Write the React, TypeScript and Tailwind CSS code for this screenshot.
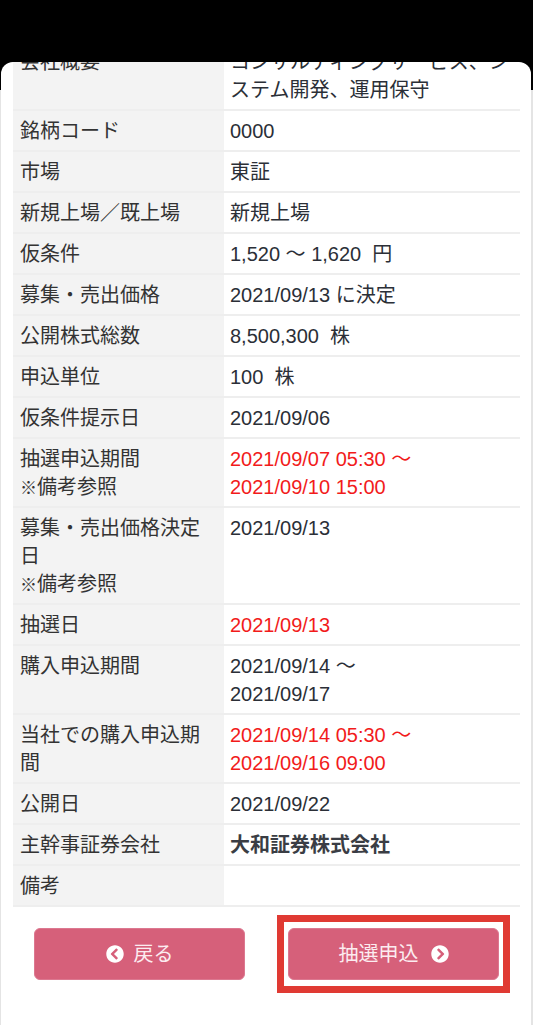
import { FaChevronCircleLeft, FaChevronCircleRight } from "react-icons/fa"

type Row = { label: React.ReactNode; value: React.ReactNode; tone?: "red" | "bold" }

// one fixed-height line, so mixed fonts can't stretch the row
function L({ children }: { children: React.ReactNode }) {
  return <div className="h-[28px] whitespace-nowrap">{children}</div>
}

const note = (
  <L>
    <span className="text-[17px] leading-none">※</span>備考参照
  </L>
)

const rows: Row[] = [
  { label: "会社概要", value: "コンサルティングサービス、システム開発、運用保守" },
  { label: "銘柄コード", value: "0000" },
  { label: "市場", value: "東証" },
  { label: "新規上場／既上場", value: "新規上場" },
  { label: "仮条件", value: <L>1,520 〜 1,620{"\u00a0 "}円</L> },
  { label: "募集・売出価格", value: <L>2021/09/13 に決定</L> },
  { label: "公開株式総数", value: <L>8,500,300{"\u00a0 "}株</L> },
  { label: "申込単位", value: <L>100{"\u00a0 "}株</L> },
  { label: "仮条件提示日", value: "2021/09/06" },
  {
    label: (
      <>
        <L>抽選申込期間</L>
        {note}
      </>
    ),
    value: (
      <>
        <L>2021/09/07 05:30 〜</L>
        <L>2021/09/10 15:00</L>
      </>
    ),
    tone: "red",
  },
  {
    label: (
      <>
        <L>募集・売出価格決定</L>
        <L>日</L>
        {note}
      </>
    ),
    value: "2021/09/13",
  },
  { label: "抽選日", value: "2021/09/13", tone: "red" },
  {
    label: "購入申込期間",
    value: (
      <>
        <L>2021/09/14 〜</L>
        <L>2021/09/17</L>
      </>
    ),
  },
  {
    label: (
      <>
        <L>当社での購入申込期</L>
        <L>間</L>
      </>
    ),
    value: (
      <>
        <L>2021/09/14 05:30 〜</L>
        <L>2021/09/16 09:00</L>
      </>
    ),
    tone: "red",
  },
  { label: "公開日", value: "2021/09/22" },
  { label: "主幹事証券会社", value: "大和証券株式会社", tone: "bold" },
  { label: "備考", value: "" },
]

export default function App() {
  return (
    <div className="min-h-screen bg-[linear-gradient(to_bottom,#000_90px,#e4e4e4_90px)] pl-[1px] pr-[2px] pt-[62px] font-['Liberation_Sans','Noto_Sans_CJK_JP',sans-serif] text-[20px] leading-[28px]">
      <div className="min-h-[963px] overflow-hidden rounded-t-[12px] bg-white pl-[12px] pr-[11px]">
        <div className="-mt-[20px]">
          {rows.map((row, i) => (
            <div key={i} className="grid grid-cols-[211px_1fr] border-b-2 border-[#eeeeee]">
              <div className="bg-[#f3f3f3] pb-[5px] pl-[7px] pr-[7px] pt-[6px] text-[#333333]">
                {typeof row.label === "string" ? <L>{row.label}</L> : row.label}
              </div>
              <div
                className={`pb-[5px] pl-[6px] pr-[6px] pt-[6px] ${
                  row.tone === "red" ? "text-[#f21b1b]" : row.tone === "bold" ? "font-semibold text-[#3a3d44]" : "text-[#2b2f37]"
                }`}
              >
                {row.value}
              </div>
            </div>
          ))}
        </div>

        <div className="grid grid-cols-2 gap-[43px] px-[21px] pt-[21px]">
          <button
            type="button"
            className="flex h-[52px] items-center justify-center gap-[10px] rounded-[6px] border border-[#dc7890] bg-[#d6607a] text-[#fcecf0]"
          >
            <FaChevronCircleLeft className="size-[18px] text-white" aria-hidden="true" />
            <span>戻る</span>
          </button>
          <div className="relative">
            <div className="pointer-events-none absolute -bottom-[13px] -left-[11px] -right-[11px] -top-[13px] border-[7px] border-[#e03a33]" />
            <button
              type="button"
              className="relative flex h-[52px] w-full items-center justify-center gap-[12px] rounded-[6px] border border-[#dc7890] bg-[#d6607a] text-[#fcecf0]"
            >
              <span>抽選申込</span>
              <FaChevronCircleRight className="size-[18px] text-white" aria-hidden="true" />
            </button>
          </div>
        </div>
      </div>
    </div>
  )
}
